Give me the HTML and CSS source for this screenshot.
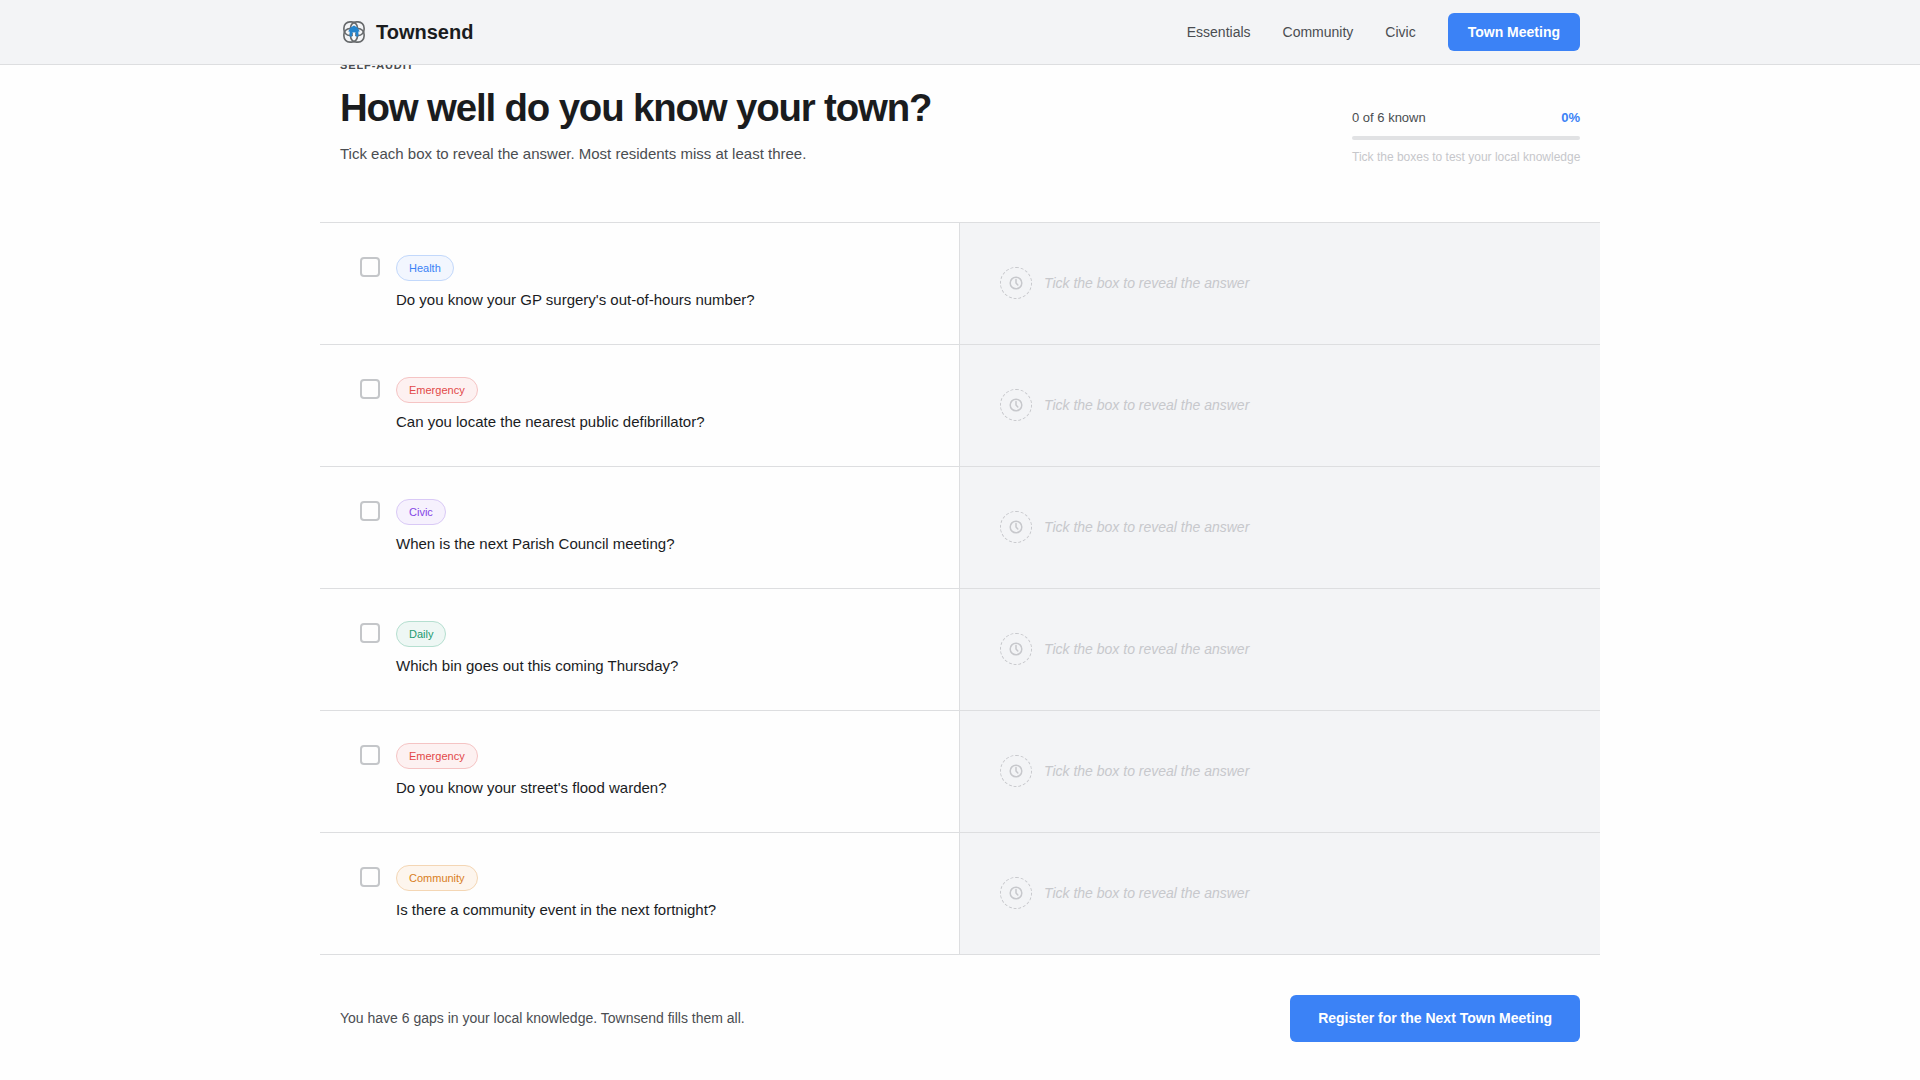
FILE: index.html
```html
<!DOCTYPE html>
<html lang="en">
<head>
<meta charset="utf-8">
<title>Townsend</title>
<link rel="stylesheet" href="styles.css">
</head>
<body>
<svg width="0" height="0" class="sprite" aria-hidden="true">
  <symbol id="clock" viewBox="0 0 14 14">
    <circle cx="7" cy="7" r="5.8" fill="none" stroke="currentColor" stroke-width="1.5"/>
    <path d="M7 3.5V7l1.8 2" fill="none" stroke="currentColor" stroke-width="1.5" stroke-linecap="round" stroke-linejoin="round"/>
  </symbol>
</svg>
<header class="topbar">
  <div class="topbar-inner">
    <a class="brand">
      <svg class="logo" viewBox="0 0 28 28">
        <g fill="none" stroke="#66696b" stroke-width="1.6">
          <rect x="3.9" y="3.9" width="13.6" height="13.6" rx="6"/>
          <rect x="10.5" y="3.9" width="13.6" height="13.6" rx="6"/>
          <rect x="3.9" y="10.5" width="13.6" height="13.6" rx="6"/>
          <rect x="10.5" y="10.5" width="13.6" height="13.6" rx="6"/>
        </g>
        <path d="M10.6 9.6L14 7.6l3.4 2 2.4 4h-1.4v5h-2.6v-4.2h-3.6v4.2H9.6v-5H8.2z" fill="#2484cc"/>
        <path d="M12.9 14.8h2.2v7h-2.2z" fill="#f8fafc"/>
      </svg>
      <span>Townsend</span>
    </a>
    <nav class="nav">
      <a>Essentials</a>
      <a>Community</a>
      <a>Civic</a>
      <a class="button button-small">Town Meeting</a>
    </nav>
  </div>
</header>
<main class="audit">
  <section class="intro">
    <div>
      <p class="eyebrow">SELF-AUDIT</p>
      <h1>How well do you know your town?</h1>
      <p class="lead">Tick each box to reveal the answer. Most residents miss at least three.</p>
    </div>
    <div class="progress">
      <div class="progress-head"><span>0 of 6 known</span><strong>0%</strong></div>
      <div class="bar"></div>
      <p class="hint">Tick the boxes to test your local knowledge</p>
    </div>
  </section>
  <section class="list">
    <div class="row">
      <div class="question"><span class="check"></span><div><span class="tag health">Health</span><p>Do you know your GP surgery's out-of-hours number?</p></div></div>
      <div class="answer"><span class="badge"><svg><use href="#clock"/></svg></span><em>Tick the box to reveal the answer</em></div>
    </div>
    <div class="row">
      <div class="question"><span class="check"></span><div><span class="tag emergency">Emergency</span><p>Can you locate the nearest public defibrillator?</p></div></div>
      <div class="answer"><span class="badge"><svg><use href="#clock"/></svg></span><em>Tick the box to reveal the answer</em></div>
    </div>
    <div class="row">
      <div class="question"><span class="check"></span><div><span class="tag civic">Civic</span><p>When is the next Parish Council meeting?</p></div></div>
      <div class="answer"><span class="badge"><svg><use href="#clock"/></svg></span><em>Tick the box to reveal the answer</em></div>
    </div>
    <div class="row">
      <div class="question"><span class="check"></span><div><span class="tag daily">Daily</span><p>Which bin goes out this coming Thursday?</p></div></div>
      <div class="answer"><span class="badge"><svg><use href="#clock"/></svg></span><em>Tick the box to reveal the answer</em></div>
    </div>
    <div class="row">
      <div class="question"><span class="check"></span><div><span class="tag emergency">Emergency</span><p>Do you know your street's flood warden?</p></div></div>
      <div class="answer"><span class="badge"><svg><use href="#clock"/></svg></span><em>Tick the box to reveal the answer</em></div>
    </div>
    <div class="row">
      <div class="question"><span class="check"></span><div><span class="tag community">Community</span><p>Is there a community event in the next fortnight?</p></div></div>
      <div class="answer"><span class="badge"><svg><use href="#clock"/></svg></span><em>Tick the box to reveal the answer</em></div>
    </div>
  </section>
  <section class="summary">
    <p>You have 6 gaps in your local knowledge. Townsend fills them all.</p>
    <a class="button">Register for the Next Town Meeting</a>
  </section>
</main>
</body>
</html>
```
FILE: styles.css
```css
* { box-sizing: border-box; }

body {
  margin: 0;
  height: 1080px;
  overflow: hidden;
  background: #fefefe;
  color: #1a1c1e;
  font-family: "Liberation Sans", Arial, sans-serif;
}

p, h1 { margin: 0; }

.sprite { position: absolute; }

.topbar {
  position: fixed;
  inset: 0 0 auto;
  height: 65px;
  background: #f3f4f6;
  border-bottom: 1px solid #dddee0;
}

.topbar-inner {
  width: 1280px;
  height: 64px;
  margin: 0 auto;
  padding: 0 20px;
  display: flex;
  align-items: center;
  justify-content: space-between;
}

.brand {
  display: flex;
  align-items: center;
  gap: 8px;
  font-size: 20px;
  font-weight: 700;
}

.logo { width: 28px; height: 28px; }

.nav {
  display: flex;
  align-items: center;
  gap: 32px;
  font-size: 14px;
  color: #4a4d51;
}

.button {
  display: flex;
  align-items: center;
  height: 47px;
  padding: 0 28px 2px;
  border-radius: 6px;
  background: #3b82f6;
  color: #fff;
  font-size: 14px;
  font-weight: 700;
}

.button-small { height: 38px; padding: 0 20px; }

.audit { width: 1280px; margin: 0 auto; }

.intro {
  height: 222px;
  padding: 59px 20px 0;
  display: flex;
  justify-content: space-between;
}

.eyebrow {
  font-size: 11px;
  line-height: 13px;
  font-weight: 700;
  letter-spacing: 0.08em;
  color: #4a4d51;
}

h1 {
  margin-top: 13px;
  font-size: 38.4px;
  line-height: 46px;
  letter-spacing: -0.03em;
}

.lead {
  margin-top: 11px;
  font-size: 15px;
  line-height: 24px;
  color: #4a4d51;
}

.progress { padding-top: 49px; width: 228px; }

.progress-head {
  display: flex;
  justify-content: space-between;
  font-size: 13px;
  line-height: 20px;
  color: #4a4d51;
}

.progress-head strong { color: #3b82f6; }

.bar {
  height: 4px;
  margin-top: 8px;
  border-radius: 2px;
  background: #e1e2e4;
}

.hint {
  margin-top: 8px;
  font-size: 12px;
  line-height: 18px;
  white-space: nowrap;
  color: #c6c7cb;
}

.list { border-top: 1px solid #dddee0; }

.row {
  height: 122px;
  display: grid;
  grid-template-columns: 1fr 1fr;
  border-bottom: 1px solid #dddee0;
}

.question {
  display: flex;
  gap: 16px;
  padding: 32px 40px;
  border-right: 1px solid #dddee0;
}

.question p { margin-top: 7px; font-size: 15px; line-height: 23px; }

.check {
  width: 20px;
  height: 20px;
  margin-top: 2px;
  border: 2px solid #c4c6c9;
  border-radius: 4px;
}

.tag {
  display: block;
  width: max-content;
  height: 26px;
  padding: 0 12px;
  border: 1px solid;
  border-radius: 13px;
  font-size: 11px;
  line-height: 24px;
}

.health { color: #3b82f6; background: #f2f6fe; border-color: #c2d8fb; }
.emergency { color: #e24848; background: #fdf1f1; border-color: #f5c4c4; }
.civic { color: #8446e6; background: #f6f1fd; border-color: #d9c9f6; }
.daily { color: #219a70; background: #eef7f4; border-color: #b5dfd0; }
.community { color: #d97e22; background: #fdf5ed; border-color: #f4d6b4; }

.answer {
  display: flex;
  align-items: center;
  gap: 12px;
  padding: 0 40px 2px;
  background: #f3f4f6;
  color: #c7c8cc;
  font-size: 14px;
}

.badge {
  display: grid;
  place-items: center;
  width: 32px;
  height: 32px;
  border: 1px dashed;
  border-radius: 50%;
}

.badge svg { width: 14px; height: 14px; }

.summary {
  display: flex;
  align-items: center;
  justify-content: space-between;
  padding: 40px 20px;
  font-size: 14px;
  color: #4a4d51;
}

.summary p { padding-bottom: 2px; }
```
